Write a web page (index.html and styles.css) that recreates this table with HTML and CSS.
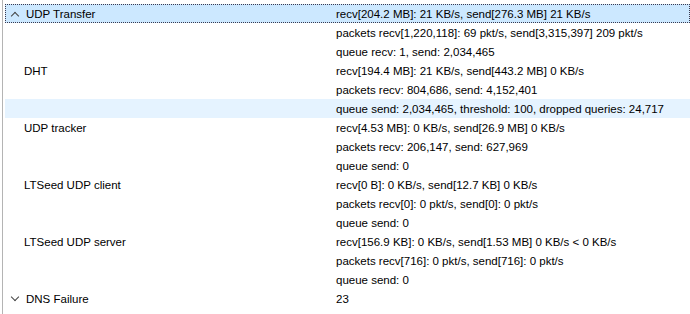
FILE: index.html
```html
<!DOCTYPE html>
<html>
<head>
<meta charset="utf-8">
<link rel="stylesheet" href="styles.css">
</head>
<body>
<div class="tree">
  <div class="row selected"><div class="name group"><span class="chev up"></span>UDP Transfer</div><div class="val">recv[204.2 MB]: 21 KB/s, send[276.3 MB] 21 KB/s</div></div>
  <div class="row"><div class="name"></div><div class="val">packets recv[1,220,118]: 69 pkt/s, send[3,315,397] 209 pkt/s</div></div>
  <div class="row"><div class="name"></div><div class="val">queue recv: 1, send: 2,034,465</div></div>
  <div class="row"><div class="name child">DHT</div><div class="val">recv[194.4 MB]: 21 KB/s, send[443.2 MB] 0 KB/s</div></div>
  <div class="row"><div class="name"></div><div class="val">packets recv: 804,686, send: 4,152,401</div></div>
  <div class="row hover"><div class="name"></div><div class="val">queue send: 2,034,465, threshold: 100, dropped queries: 24,717</div></div>
  <div class="row"><div class="name child">UDP tracker</div><div class="val">recv[4.53 MB]: 0 KB/s, send[26.9 MB] 0 KB/s</div></div>
  <div class="row"><div class="name"></div><div class="val">packets recv: 206,147, send: 627,969</div></div>
  <div class="row"><div class="name"></div><div class="val">queue send: 0</div></div>
  <div class="row"><div class="name child">LTSeed UDP client</div><div class="val">recv[0 B]: 0 KB/s, send[12.7 KB] 0 KB/s</div></div>
  <div class="row"><div class="name"></div><div class="val">packets recv[0]: 0 pkt/s, send[0]: 0 pkt/s</div></div>
  <div class="row"><div class="name"></div><div class="val">queue send: 0</div></div>
  <div class="row"><div class="name child">LTSeed UDP server</div><div class="val">recv[156.9 KB]: 0 KB/s, send[1.53 MB] 0 KB/s &lt; 0 KB/s</div></div>
  <div class="row"><div class="name"></div><div class="val">packets recv[716]: 0 pkt/s, send[716]: 0 pkt/s</div></div>
  <div class="row"><div class="name"></div><div class="val">queue send: 0</div></div>
  <div class="row"><div class="name group"><span class="chev down"></span>DNS Failure</div><div class="val">23</div></div>
</div>
</body>
</html>
```
FILE: styles.css
```css
html, body {
  margin: 0;
  padding: 0;
  background: #fff;
}
body {
  font-family: "Liberation Sans", Arial, sans-serif;
  font-size: 11.5px;
  color: #000;
}
.tree {
  margin-left: 2px;
  border-left: 1px solid #b4b4b4;
  padding: 4px 0 6px 2px;
  height: 304px;
}
.row {
  display: grid;
  grid-template-columns: 330px 1fr;
  height: 19px;
  align-items: center;
  box-sizing: border-box;
  border: 1px solid transparent;
}
.row.selected {
  background: #cce8ff;
  border: 1px dotted #3a3a50;
}
.row.hover {
  background: #e5f3ff;
}
.name {
  white-space: nowrap;
  padding-left: 18px;
}
.name.group {
  display: flex;
  align-items: center;
  padding-left: 4px;
}
.val {
  white-space: nowrap;
  padding-left: 0;
}
.chev {
  display: inline-block;
  width: 5px;
  height: 5px;
  border-left: 1px solid #444;
  border-top: 1px solid #444;
  margin-right: 8px;
  margin-left: 2px;
}
.chev.up {
  transform: rotate(45deg);
  margin-top: 4px;
}
.chev.down {
  transform: rotate(225deg);
  margin-top: -3px;
}
```
